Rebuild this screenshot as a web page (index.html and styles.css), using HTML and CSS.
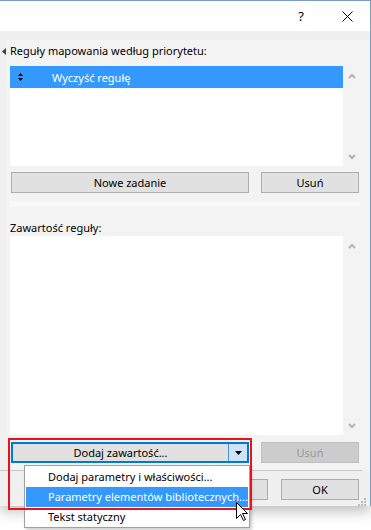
FILE: index.html
```html
<!DOCTYPE html>
<html lang="pl">
<head>
    <meta charset="UTF-8">
    <title>Reguły mapowania</title>
    <link rel="stylesheet" href="styles.css">
</head>
<body>
    <div class="window">
        <div class="titleBar">
            <span class="titleBtn help">?</span>
            <span class="titleBtn">
                <svg width="11" height="11" viewBox="0 0 11 11"><path d="M0.5 0.5L10.5 10.5M10.5 0.5L0.5 10.5" stroke="#000" stroke-width="1"/></svg>
            </span>
        </div>
        <div class="content">
            <div class="section">
                <div class="gutter">
                    <svg width="4" height="7" viewBox="0 0 4 7"><path d="M4 0V7L0 3.5Z" fill="#404040"/></svg>
                </div>
                <div class="panel">
                    <div class="label">Reguły mapowania według priorytetu:</div>
                    <div class="listRow">
                        <div class="list rules">
                            <div class="item selected">
                                <svg class="sortIcon" width="5" height="8" viewBox="0 0 5 8"><path d="M2.5 0L5 3H0Z M0 5H5L2.5 8Z" fill="#000"/></svg>
                                <span>Wyczyść regułę</span>
                            </div>
                        </div>
                        <div class="scroll">
                            <svg width="8" height="6" viewBox="0 0 8 6"><path d="M1 5L4 2L7 5" fill="none" stroke="#b4b4b4" stroke-width="2"/></svg>
                            <svg width="8" height="6" viewBox="0 0 8 6"><path d="M1 1L4 4L7 1" fill="none" stroke="#b4b4b4" stroke-width="2"/></svg>
                        </div>
                    </div>
                    <div class="buttonRow">
                        <button class="btn wide">Nowe zadanie</button>
                        <button class="btn narrow">Usuń</button>
                    </div>
                    <div class="splitter"></div>
                    <div class="label second">Zawartość reguły:</div>
                    <div class="listRow tight">
                        <div class="list contents"></div>
                        <div class="scroll">
                            <svg width="8" height="6" viewBox="0 0 8 6"><path d="M1 5L4 2L7 5" fill="none" stroke="#b4b4b4" stroke-width="2"/></svg>
                            <svg width="8" height="6" viewBox="0 0 8 6"><path d="M1 1L4 4L7 1" fill="none" stroke="#b4b4b4" stroke-width="2"/></svg>
                        </div>
                    </div>
                    <div class="buttonRow low">
                        <div class="splitBtn">
                            <span class="splitMain">Dodaj zawartość...</span>
                            <span class="splitDrop">
                                <svg width="7" height="4" viewBox="0 0 7 4"><path d="M0 0H7L3.5 4Z" fill="#000"/></svg>
                            </span>
                        </div>
                        <button class="btn narrow disabled">Usuń</button>
                    </div>
                </div>
            </div>
            <div class="separator"></div>
            <div class="footer">
                <button class="btn dlg">Anuluj</button>
                <button class="btn dlg">OK</button>
            </div>
        </div>
        <svg class="grip" width="8" height="8" viewBox="0 0 8 8">
            <rect x="6" y="0" width="2" height="2"/>
            <rect x="3" y="3" width="2" height="2"/>
            <rect x="6" y="3" width="2" height="2"/>
            <rect x="0" y="6" width="2" height="2"/>
            <rect x="3" y="6" width="2" height="2"/>
            <rect x="6" y="6" width="2" height="2"/>
        </svg>
    </div>

    <!-- rozwinięte menu przycisku -->
    <ul class="menu">
        <li>Dodaj parametry i właściwości...</li>
        <li class="hover">Parametry elementów bibliotecznych...</li>
        <li>Tekst statyczny</li>
    </ul>
    <div class="highlight"></div>
    <svg class="cursor" width="12" height="19" viewBox="0 0 12 19"><path d="M0.5 0.5V16.5L4.5 12.5L7.5 18.5L9.5 17.5L6.5 11.5H11.5Z" fill="#fff" stroke="#000" stroke-width="1"/></svg>
</body>
</html>
```

FILE: styles.css
```css
*{
    margin: 0;
    padding: 0;
    box-sizing: border-box;
}
body{
    width: 371px;
    height: 530px;
    background: #fff;
    font-family: "Noto Sans", "DejaVu Sans", sans-serif;
    font-size: 11px;
    color: #000;
    position: relative;
    overflow: hidden;
}
.window{
    width: 371px;
    height: 506px;
    border-top: 1px solid #7b9bc0;
    border-right: 1px solid #7b9bc0;
    background: #f0f0f0;
    box-shadow: 0 4px 14px rgba(0,0,0,.3);
    position: relative;
}
.titleBar{
    height: 30px;
    background: #fff;
    display: flex;
    justify-content: flex-end;
}
.titleBtn{
    width: 46px;
    display: flex;
    align-items: center;
    justify-content: center;
}
.help{
    font-size: 13px;
}
.content{
    padding-top: 9px;
}
.section{
    display: flex;
}
.gutter{
    width: 7px;
    padding: 8px 0 0 2px;
}
.gutter svg{
    display: block;
}
.panel{
    flex: 1;
    background: #f3f3f3;
    padding: 3px 0 7px 3px;
}
.label{
    height: 15px;
    line-height: 15px;
    white-space: nowrap;
}
.label.second{
    margin-top: 13px;
}
.listRow{
    display: flex;
    margin-top: 8px;
}
.listRow.tight{
    margin-top: 1px;
}
.list{
    width: 333px;
    background: #fff;
}
.rules{
    height: 100px;
}
.contents{
    height: 199px;
}
.item{
    height: 22px;
    display: flex;
    align-items: center;
    padding-left: 8px;
}
.item.selected{
    background: #3399ff;
    color: #fff;
}
.sortIcon{
    margin-right: 29px;
}
.scroll{
    width: 17px;
    display: flex;
    flex-direction: column;
    justify-content: space-between;
    align-items: center;
    padding: 7px 0 6px;
}
.scroll svg{
    display: block;
}
.buttonRow{
    display: flex;
    margin-top: 6px;
    padding-left: 1px;
}
.buttonRow.low{
    margin-top: 7px;
}
.btn{
    height: 21px;
    border: 1px solid #adadad;
    background: #e1e1e1;
    font-family: inherit;
    font-size: 11px;
    color: #000;
    line-height: 19px;
    text-align: center;
}
.wide{
    width: 238px;
}
.narrow{
    width: 98px;
    margin-left: 12px;
}
.btn.disabled{
    background: #cccccc;
    border-color: #bfbfbf;
    color: #9a9a9a;
}
.splitter{
    height: 6px;
    margin-top: 8px;
    width: 350px;
    background: #f8f8f8;
}
.splitBtn{
    width: 238px;
    height: 21px;
    border: 2px solid #0078d7;
    background: #e1e1e1;
    display: flex;
}
.splitMain{
    flex: 1;
    text-align: center;
    line-height: 17px;
}
.splitDrop{
    width: 19px;
    background: #cce4f7;
    border-left: 1px solid #4a94d8;
    display: flex;
    align-items: center;
    justify-content: center;
}
.separator{
    width: 362px;
    height: 1px;
    background: #c8c8c8;
}
.footer{
    display: flex;
    justify-content: flex-end;
    gap: 13px;
    padding: 8px 11px 0 0;
}
.dlg{
    width: 78px;
}
.grip{
    position: absolute;
    right: 4px;
    bottom: 0;
    fill: #bcbcbc;
}
.menu{
    position: absolute;
    left: 24px;
    top: 465px;
    width: 226px;
    height: 63px;
    list-style: none;
    background: #fff;
    border: 1px solid #a0a0a0;
    padding: 1px 1px 0;
    box-shadow: 2px 2px 3px rgba(0,0,0,.2);
}
.menu li{
    height: 20px;
    line-height: 20px;
    padding-left: 22px;
    white-space: nowrap;
}
.menu li.hover{
    background: #3399ff;
    color: #fff;
}
.highlight{
    position: absolute;
    left: 8px;
    top: 438px;
    width: 244px;
    height: 72px;
    border: 2px solid #e8141c;
}
.cursor{
    position: absolute;
    left: 236px;
    top: 502px;
}
```
